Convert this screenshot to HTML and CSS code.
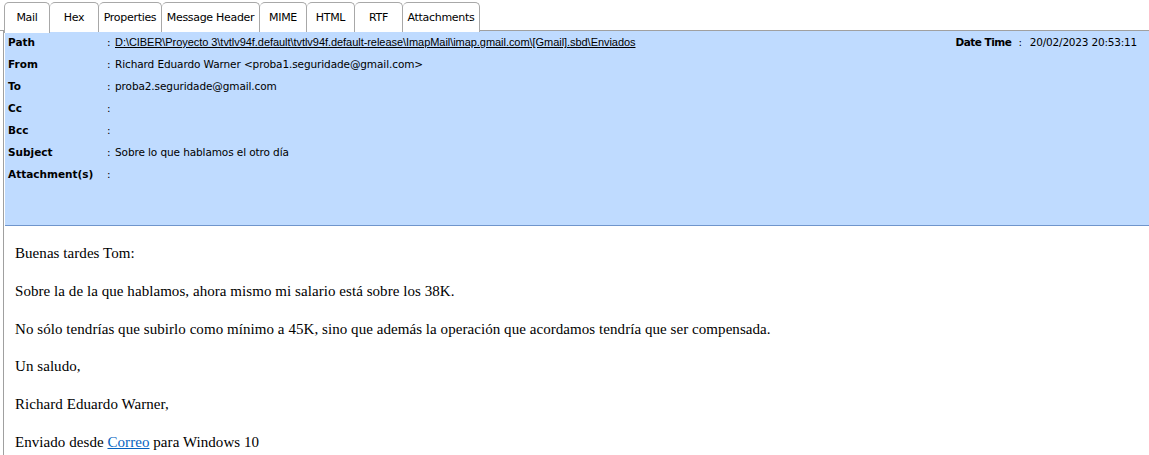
FILE: index.html
```html
<!DOCTYPE html>
<html>
<head>
<meta charset="utf-8">
<link rel="stylesheet" href="styles.css">
</head>
<body>
<div class="tabs">
  <div class="tab active" style="width:46px">Mail</div>
  <div class="tab" style="width:49px">Hex</div>
  <div class="tab" style="width:63px">Properties</div>
  <div class="tab" style="width:98px">Message Header</div>
  <div class="tab" style="width:47px">MIME</div>
  <div class="tab" style="width:48px">HTML</div>
  <div class="tab" style="width:48px">RTF</div>
  <div class="tab" style="width:77px">Attachments</div>
</div>
<div class="main">
  <div class="header">
    <div class="row">
      <span class="label">Path</span><span class="colon">:</span>
      <span class="value path">D:\CIBER\Proyecto 3\tvtlv94f.default\tvtlv94f.default-release\ImapMail\imap.gmail.com\[Gmail].sbd\Enviados</span>
      <span class="date"><b>Date Time</b><span class="dcolon">:</span>20/02/2023 20:53:11</span>
    </div>
    <div class="row"><span class="label">From</span><span class="colon">:</span><span class="value">Richard Eduardo Warner &lt;proba1.seguridade@gmail.com&gt;</span></div>
    <div class="row"><span class="label">To</span><span class="colon">:</span><span class="value">proba2.seguridade@gmail.com</span></div>
    <div class="row"><span class="label">Cc</span><span class="colon">:</span><span class="value"></span></div>
    <div class="row"><span class="label">Bcc</span><span class="colon">:</span><span class="value"></span></div>
    <div class="row"><span class="label">Subject</span><span class="colon">:</span><span class="value">Sobre lo que hablamos el otro día</span></div>
    <div class="row"><span class="label">Attachment(s)</span><span class="colon">:</span><span class="value"></span></div>
  </div>
  <div class="content">
    <p>Buenas tardes Tom:</p>
    <p>Sobre la de la que hablamos, ahora mismo mi salario está sobre los 38K.</p>
    <p>No sólo tendrías que subirlo como mínimo a 45K, sino que además la operación que acordamos tendría que ser compensada.</p>
    <p>Un saludo,</p>
    <p>Richard Eduardo Warner,</p>
    <p>Enviado desde <a href="#">Correo</a> para Windows 10</p>
  </div>
</div>
</body>
</html>
```

FILE: styles.css
```css
html, body {
  margin: 0;
  padding: 0;
  background: #ffffff;
  overflow: hidden;
}
body {
  width: 1149px;
  height: 455px;
  font-family: "DejaVu Sans", sans-serif;
}
.tabs {
  display: flex;
  padding: 2px 0 0 4px;
  height: 31px;
  box-sizing: border-box;
  background: #ffffff;
  border-bottom: 1px solid #a0a0a0;
}
.tab {
  box-sizing: border-box;
  height: 30px;
  border: 1px solid #a8a8a8;
  border-bottom: none;
  border-left: none;
  border-radius: 5px 5px 0 0;
  background: #ffffff;
  font-size: 11px;
  color: #000;
  text-align: center;
  line-height: 30px;
  font-family: "DejaVu Sans", sans-serif;
  letter-spacing: -0.3px;
}
.tab:first-child {
  border-left: 1px solid #a8a8a8;
}
.tab.active {
  height: 31px;
  margin-bottom: -1px;
  background: #ffffff;
}
.main {
  border-left: 1px solid #a0a0a0;
  margin-left: 3px;
  padding-left: 1px;
  height: 424px;
}
.header {
  background: #bfdbff;
  height: 192px;
  border-bottom: 1px solid #6f95cc;
  padding-top: 2px;
  box-sizing: content-box;
}
.row {
  display: flex;
  height: 22px;
  line-height: 18px;
  font-size: 10.5px;
  color: #000;
}
.label {
  width: 99px;
  padding-left: 3px;
  font-weight: bold;
}
.colon {
  width: 8px;
  color: #000;
}
.value {
  flex: 1;
  letter-spacing: -0.1px;
}
.path {
  font-family: "Liberation Sans", Arial, sans-serif;
  font-size: 11px;
  letter-spacing: -0.05px;
  text-decoration: underline;
}
.date {
  padding-right: 12px;
  letter-spacing: -0.2px;
}
.date b {
  letter-spacing: -0.5px;
}
.dcolon {
  padding: 0 8px 0 7px;
}
.content {
  padding: 9px 0 0 10px;
  font-family: "Liberation Serif", "Times New Roman", serif;
  font-size: 15px;
  letter-spacing: 0.06px;
  color: #000;
}
.content p {
  margin: 0;
  height: 37.8px;
  line-height: 37.8px;
}
.content a {
  color: #0563c1;
  text-decoration: underline;
}
```
